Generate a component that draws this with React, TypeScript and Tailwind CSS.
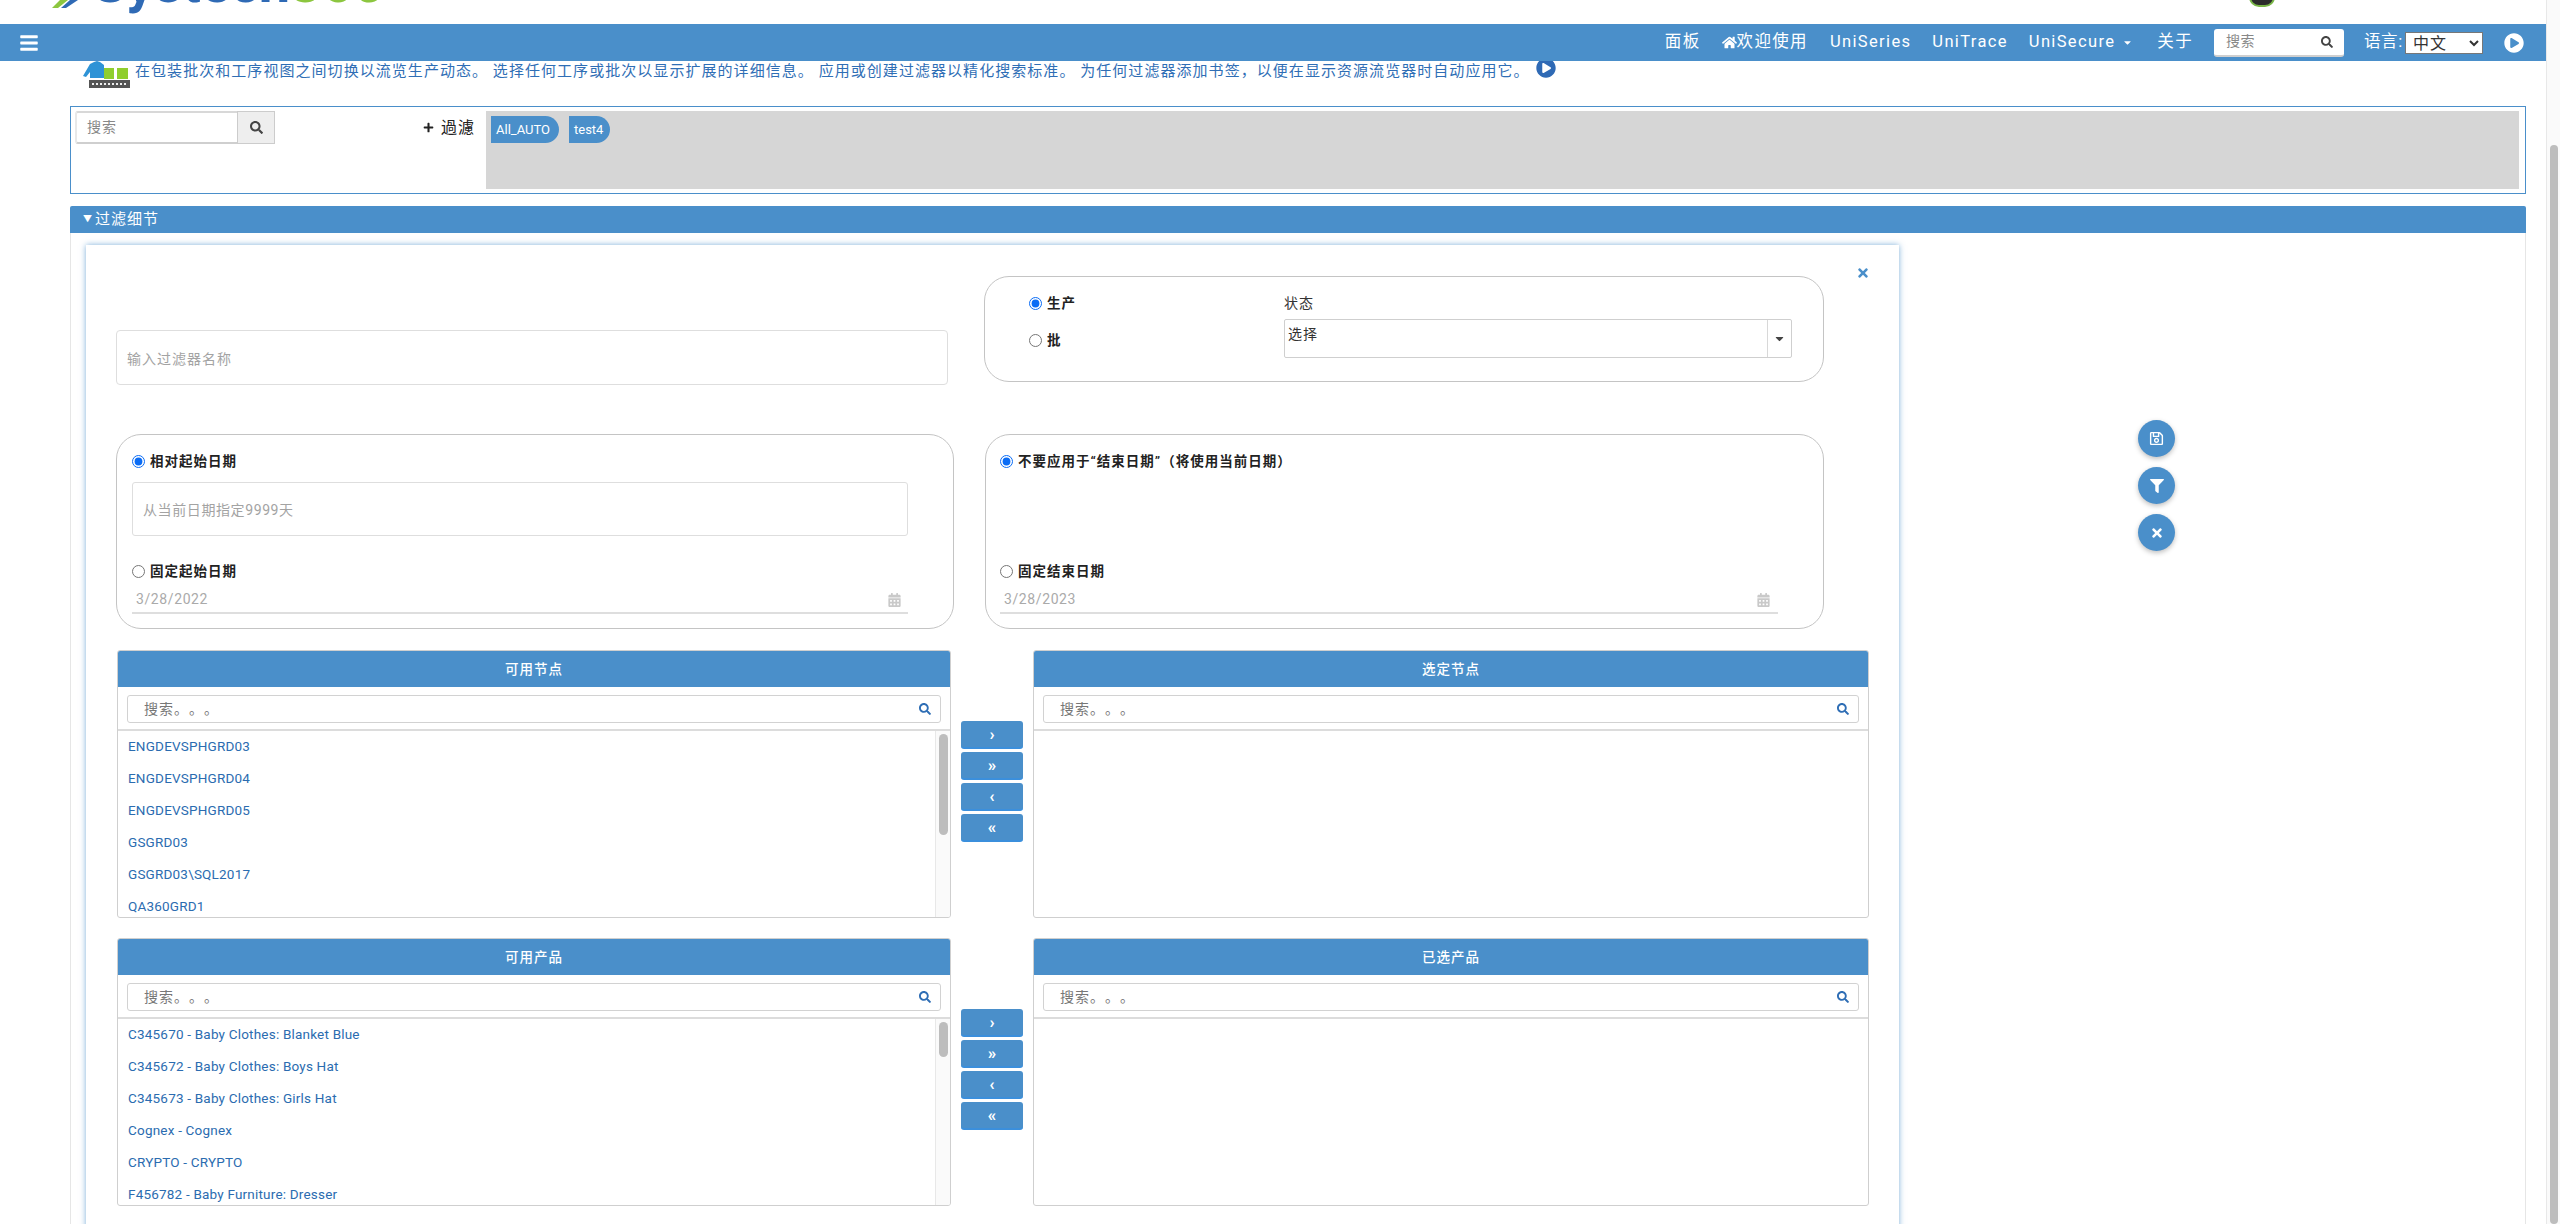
import { FaBars, FaCalendarAlt, FaCaretDown, FaFilter, FaHome, FaPlayCircle, FaPlus, FaRegSave, FaSearch, FaTimes } from "react-icons/fa";

const nodes = ["ENGDEVSPHGRD03", "ENGDEVSPHGRD04", "ENGDEVSPHGRD05", "GSGRD03", "GSGRD03\\SQL2017", "QA360GRD1"];
const products = [
  "C345670 - Baby Clothes: Blanket Blue",
  "C345672 - Baby Clothes: Boys Hat",
  "C345673 - Baby Clothes: Girls Hat",
  "Cognex - Cognex",
  "CRYPTO - CRYPTO",
  "F456782 - Baby Furniture: Dresser",
];

function Radio({ label, checked, bold }: { label: string; checked?: boolean; bold?: boolean }) {
  return (
    <label className={`flex items-center gap-[5px] text-[13.5px] leading-none tracking-[1px] text-[#222] [text-spacing-trim:space-all] ${bold ? "font-semibold" : ""}`}>
      <input type="radio" defaultChecked={checked} className="m-0 h-[13px] w-[13px] accent-[#0a6cf5]" />
      {label}
    </label>
  );
}

function DateField({ value, iconOffset }: { value: string; iconOffset: string }) {
  return (
    <div className="mt-[6px] flex h-[30px] items-center justify-between border-b-2 border-[#dedede] pl-[4px] pt-[3px] text-[14px] tracking-[0.6px] text-[#aaa]">
      <span>{value}</span>
      <FaCalendarAlt className={`h-[14px] w-[13px] text-[#c9c9c9] ${iconOffset}`} />
    </div>
  );
}

function ListPanel({ title, items, thumb, className }: { title: string; items?: string[]; thumb?: string; className: string }) {
  return (
    <div className={`flex h-[268px] flex-col overflow-hidden rounded-[3px] border border-[#cfcfcf] ${className}`}>
      <div className="flex h-[36px] shrink-0 items-center justify-center bg-[#4a8fca] text-[13.5px] font-medium tracking-[1px] text-white">
        {title}
      </div>
      <div className="h-[44px] shrink-0 border-b-2 border-[#dcdcdc] px-[9px] py-[8px]">
        <div className="flex h-[28px] items-center justify-between rounded-[3px] border border-[#d2d2d2] pl-[16px] pr-[9px] text-[14px] tracking-[1px] text-[#777] [text-spacing-trim:space-all]">
          <span>搜索。。。</span>
          <FaSearch className="h-[12px] w-[12px] text-[#2f6eb5]" />
        </div>
      </div>
      <div className="flex min-h-0 flex-1">
        <ul className="min-w-0 flex-1 overflow-hidden pl-[10px]">
          {items?.map((item) => (
            <li key={item} className="flex h-[32px] shrink-0 items-center pb-[2px] text-[13.5px] tracking-[0.2px] text-[#2b6cb0]">
              {item}
            </li>
          ))}
        </ul>
        {items && (
          <div className="w-[15px] shrink-0 border-l border-[#e8e8e8] bg-[#fafafa] pl-[3px] pt-[3px]">
            <div className={`w-[9px] rounded-full bg-[#bdbdbd] ${thumb}`} />
          </div>
        )}
      </div>
    </div>
  );
}

function MoveButtons() {
  return (
    <div className="flex w-[62px] flex-col gap-[3px] pt-[71px]">
      {["›", "»", "‹", "«"].map((glyph) => (
        <button key={glyph} className="flex h-[28px] items-center justify-center rounded-[3px] border-b-2 border-[#3b8fdc] bg-[#4a8fca] text-[17px] font-bold leading-none text-white">
          {glyph}
        </button>
      ))}
    </div>
  );
}

function RoundButton({ children }: { children: React.ReactNode }) {
  return (
    <button className="flex h-[37px] w-[37px] items-center justify-center rounded-full bg-[#4a8fca] text-white shadow-[0_2px_5px_rgba(0,0,0,0.25)]">
      {children}
    </button>
  );
}

export default function App() {
  return (
    <div className="flex h-[1224px] w-[2560px] overflow-hidden bg-white font-['Roboto','Noto_Sans_CJK_SC',sans-serif]">
      <div className="min-w-0 flex-1">
        {/* logo is cut off by the top of the page */}
        <header className="flex h-[24px] items-end overflow-hidden">
          <div className="ml-[52px] flex h-[24px] w-[2200px] items-start">
            <svg width="26" height="8" viewBox="0 0 26 8" className="mt-0 shrink-0">
              <path d="M8 0h8L6 8H0z" fill="#8cc63f" />
              <path d="M18 0h8L14 8h-5z" fill="#2f6ab5" />
            </svg>
            <div className="ml-[14px] mt-[-45px] flex text-[56px] font-bold leading-[56px] tracking-[-0.5px]">
              <span className="text-[#2f6ab5]">Systech</span>
              <span className="text-[#8cc63f]">360</span>
            </div>
          </div>
          <div className="mb-[17px] h-[20px] w-[26px] -translate-x-[3px] rounded-full border-2 border-[#7ab648] bg-[#2b2b2b]" />
        </header>

        <nav className="relative z-10 flex h-[37px] items-center bg-[#4a8fca] text-[16.5px] tracking-[1.35px] text-white">
          <FaBars className="ml-[19px] h-[20px] w-[20px]" />
          <div className="ml-auto flex items-center">
            <span className="mr-[21px]">面板</span>
            <FaHome className="h-[15px] w-[15px]" />
            <span className="mr-[22px]">欢迎使用</span>
            <span className="mr-[21px]">UniSeries</span>
            <span className="mr-[21px]">UniTrace</span>
            <span className="mr-[8px]">UniSecure</span>
            <FaCaretDown className="mr-[25px] h-[11px] w-[9px]" />
            <span className="mr-[21px]">关于</span>
            <div className="mr-[20px] flex h-[28px] w-[130px] items-center justify-between rounded-[3px] border-b-2 border-[#cfcfcf] bg-white pl-[12px] pr-[11px] text-[14px] tracking-[0.5px] text-[#888]">
              <span>搜索</span>
              <FaSearch className="h-[12px] w-[12px] text-[#444]" />
            </div>
            <span className="w-[41px] whitespace-nowrap tracking-[0.6px]">语言:</span>
            <select className="h-[22px] w-[78px] border border-[#777] bg-white pl-[3px] text-[16px] tracking-[1px] text-[#333]">
              <option>中文</option>
            </select>
            <FaPlayCircle className="ml-[21px] mr-[22px] h-[20px] w-[20px]" />
          </div>
        </nav>

        <div className="flex h-[45px] items-start pl-[83px]">
          <svg width="47" height="27" viewBox="0 0 47 27" className="shrink-0">
            <path d="M0 15 L7 3 L11 1 L14 0 L17 1 L21 4 L21 17 L7 17 L7 11 L3 16z" fill="#2e93d6" />
            <rect x="21" y="7" width="10" height="11" fill="#8fce2e" />
            <rect x="34" y="7" width="11" height="11" fill="#8fce2e" />
            <rect x="6" y="19" width="41" height="8" fill="#555" />
            <path d="M9 23h35" stroke="#eee" strokeWidth="2" strokeDasharray="2 2" />
          </svg>
          <p className="ml-[5px] mt-[1px] whitespace-pre text-[15px] leading-[18px] tracking-[1.05px] text-[#2f6eb5]">
            在包装批次和工序视图之间切换以流览生产动态。 选择任何工序或批次以显示扩展的详细信息。 应用或创建过滤器以精化搜索标准。 为任何过滤器添加书签，以便在显示资源流览器时自动应用它。
          </p>
          <FaPlayCircle className="relative -mt-[3px] ml-[6px] h-[20px] w-[20px] shrink-0 text-[#2f6ab5]" />
        </div>

        <section className="ml-[70px] flex h-[88px] w-[2456px] border border-[#4a8fca] py-[4px] pl-[4px] pr-[6px]">
          <div className="flex h-[33px] w-[200px] shrink-0 text-[14px]">
            <div className="flex w-[162px] items-center rounded-l-[3px] border-2 border-r-0 border-[#d8d8d8] border-b-[#cfcfcf] border-l-[#e8e8e8] pl-[10px] tracking-[1px] text-[#888]">
              搜索
            </div>
            <div className="flex w-[38px] items-center justify-center border border-[#ccc] bg-[#eee]">
              <FaSearch className="h-[13px] w-[13px] text-[#444]" />
            </div>
          </div>
          <div className="ml-[148px] flex h-[33px] w-[63px] shrink-0 items-center text-[16px] tracking-[1px] text-[#222]">
            <FaPlus className="mr-[7px] h-[11px] w-[11px]" />
            過濾
          </div>
          <div className="flex flex-1 items-start gap-[10px] bg-[#d6d6d6] px-[5px] py-[5px] text-[13px] text-white">
            <span className="flex h-[27px] w-[68px] items-center rounded-l-[3px] rounded-r-full bg-[#4a8fca] pl-[5px]">All_AUTO</span>
            <span className="flex h-[27px] w-[41px] items-center rounded-l-[3px] rounded-r-full bg-[#4a8fca] pl-[5px]">test4</span>
          </div>
        </section>

        <div className="ml-[70px] mt-[12px] flex h-[27px] w-[2456px] items-center rounded-t-[2px] bg-[#4a8fca] pl-[13px] text-[15px] tracking-[1px] text-white">
          <span className="mr-[2px] text-[9px]">▼</span>过滤细节
        </div>

        <div className="ml-[70px] flex h-[991px] w-[2456px] border-x border-[#e6e6e6] pl-[15px] pt-[12px]">
          <div className="relative h-[1000px] w-[1813px] shrink-0 pl-[30px] pt-[31px] shadow-[0_0_6px_rgba(74,143,202,0.7)]">
            <FaTimes className="absolute right-[29px] top-[21px] h-[14px] w-[14px] text-[#4a8fca]" />

            <div className="flex h-[106px] gap-[36px]">
              <div className="w-[832px] pt-[54px]">
                <input
                  placeholder="输入过滤器名称"
                  className="h-[55px] w-full rounded-[4px] border border-[#dedede] px-[10px] pt-[2px] text-[14px] tracking-[1px] placeholder:text-[#a3a3a3]"
                />
              </div>
              <div className="flex w-[840px] rounded-[25px] border border-[#c4c4c4] pl-[44px] pt-[20px]">
                <div className="flex w-[255px] flex-col gap-[23px]">
                  <Radio label="生产" checked bold />
                  <Radio label="批" bold />
                </div>
                <div className="w-[508px]">
                  <div className="h-[22px] text-[14px] leading-[13px] tracking-[1px] text-[#333]">状态</div>
                  <div className="flex h-[39px] rounded-[2px] border border-[#cfcfcf] text-[14px] tracking-[1px] text-[#333]">
                    <span className="flex-1 pl-[3px] pt-[5px] leading-[18px]">选择</span>
                    <span className="flex w-[24px] items-center justify-center border-l border-[#d8d8d8]">
                      <FaCaretDown className="h-[13px] w-[13px] text-[#444]" />
                    </span>
                  </div>
                </div>
              </div>
            </div>

            <div className="mt-[52px] flex h-[195px] gap-[31px]">
              <div className="w-[838px] rounded-[25px] border border-[#c4c4c4] pl-[15px] pt-[20px]">
                <Radio label="相对起始日期" checked bold />
                <input
                  placeholder="从当前日期指定9999天"
                  className="mt-[13px] block h-[54px] w-[776px] rounded-[3px] border border-[#dedede] px-[10px] pt-[2px] text-[14px] tracking-[0.6px] placeholder:text-[#a3a3a3]"
                />
                <div className="mt-[29px]">
                  <Radio label="固定起始日期" bold />
                </div>
                <div className="w-[776px]">
                  <DateField value="3/28/2022" iconOffset="mr-[7px]" />
                </div>
              </div>
              <div className="w-[839px] rounded-[25px] border border-[#c4c4c4] pl-[14px] pt-[20px]">
                <Radio label="不要应用于“结束日期”（将使用当前日期）" checked bold />
                <div className="mt-[96px]">
                  <Radio label="固定结束日期" bold />
                </div>
                <div className="w-[778px]">
                  <DateField value="3/28/2023" iconOffset="mr-[8px]" />
                </div>
              </div>
            </div>

            <div className="ml-[1px] mt-[21px] flex gap-[10px]">
              <ListPanel title="可用节点" items={nodes} thumb="h-[101px]" className="w-[834px]" />
              <MoveButtons />
              <ListPanel title="选定节点" className="w-[836px]" />
            </div>

            <div className="ml-[1px] mt-[20px] flex gap-[10px]">
              <ListPanel title="可用产品" items={products} thumb="h-[35px]" className="w-[834px]" />
              <MoveButtons />
              <ListPanel title="已选产品" className="w-[836px]" />
            </div>
          </div>

          <div className="ml-[239px] mt-[175px] flex flex-col gap-[10px]">
            <RoundButton><FaRegSave className="h-[15px] w-[15px]" /></RoundButton>
            <RoundButton><FaFilter className="h-[14px] w-[14px]" /></RoundButton>
            <RoundButton><FaTimes className="h-[14px] w-[14px]" /></RoundButton>
          </div>
        </div>
      </div>

      <div className="w-[14px] shrink-0 border-l border-[#e8e8e8] bg-[#fafafa] pl-[3px] pt-[145px]">
        <div className="h-[1079px] w-[8px] rounded-full bg-[#bdbdbd]" />
      </div>
    </div>
  );
}
